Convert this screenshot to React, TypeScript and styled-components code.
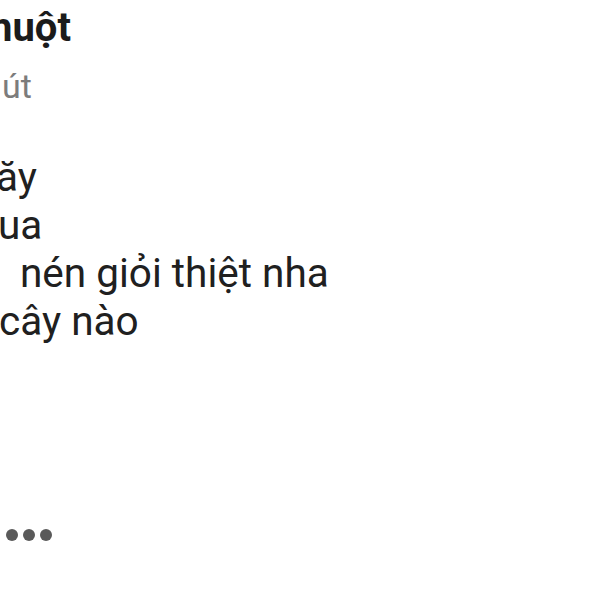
import React from "react";
import styled, { createGlobalStyle } from "styled-components";

const Global = createGlobalStyle`
  html, body {
    margin: 0;
    padding: 0;
    background: #ffffff;
  }
  body {
    font-family: Roboto, "Noto Sans", "Liberation Sans", sans-serif;
    -webkit-font-smoothing: antialiased;
  }
`;

const Screen = styled.div`
  width: 600px;
  height: 600px;
  overflow: hidden;
  background: #ffffff;
`;

const Comment = styled.div`
  display: flex;
  flex-direction: column;
  padding-top: 2px;
`;

const Line = styled.div<{ $indent: number }>`
  margin-left: ${(p) => p.$indent}px;
  white-space: pre;
`;

const Author = styled(Line)`
  font-size: 40px;
  line-height: 52px;
  font-weight: 700;
  color: #1b1b1b;
`;

const Meta = styled(Line)`
  font-size: 34px;
  line-height: 44px;
  color: #7c7c7c;
  margin-top: 10px;
`;

const Body = styled.div`
  display: flex;
  flex-direction: column;
  margin-top: 45px;
`;

const Text = styled(Line)`
  font-size: 40.5px;
  line-height: 48px;
  color: #202020;
`;

const Dots = styled.div`
  display: flex;
  gap: 5px;
  margin-top: 184px;
  margin-left: 6px;
`;

const Dot = styled.span`
  width: 12px;
  height: 12px;
  border-radius: 50%;
  background: #5a5a5a;
`;

const lines: { text: string; indent: number }[] = [
  { text: "ăy", indent: -4 },
  { text: "ua", indent: -2 },
  { text: "nén giỏi thiệt nha", indent: 20 },
  { text: "cây nào", indent: -1 },
];

export default function App() {
  return (
    <Screen>
      <Global />
      <Comment>
        <Author $indent={-10}>huột</Author>
        <Meta $indent={2}>út</Meta>
        <Body>
          {lines.map((l) => (
            <Text key={l.text} $indent={l.indent}>
              {l.text}
            </Text>
          ))}
        </Body>
        <Dots>
          <Dot />
          <Dot />
          <Dot />
        </Dots>
      </Comment>
    </Screen>
  );
}
